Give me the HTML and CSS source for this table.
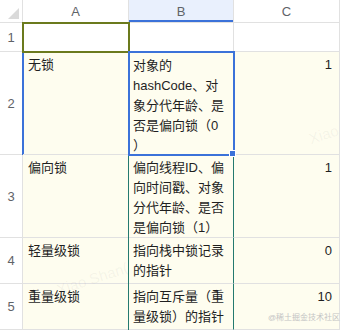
FILE: index.html
```html
<!DOCTYPE html>
<html lang="zh">
<head>
<meta charset="utf-8">
<link rel="stylesheet" href="styles.css">
</head>
<body>
<div class="sheet">
  <div class="grid">
    <div class="corner"><span class="tri"></span></div>
    <div class="colh">A</div>
    <div class="colh colh-sel">B</div>
    <div class="colh">C</div>

    <div class="rowh">1</div>
    <div class="cell white a1"></div>
    <div class="cell white"></div>
    <div class="cell white"></div>

    <div class="rowh">2</div>
    <div class="cell a2">无锁</div>
    <div class="cell b2">对象的<br>hashCode、对象分代年龄、是否是偏向锁（0）<span class="handle"></span></div>
    <div class="cell num">1</div>

    <div class="rowh">3</div>
    <div class="cell">偏向锁</div>
    <div class="cell bcol">偏向线程ID、偏向时间戳、对象分代年龄、是否是偏向锁（1）</div>
    <div class="cell num">1</div>

    <div class="rowh">4</div>
    <div class="cell">轻量级锁</div>
    <div class="cell bcol">指向栈中锁记录的指针</div>
    <div class="cell num">0</div>

    <div class="rowh">5</div>
    <div class="cell">重量级锁</div>
    <div class="cell bcol">指向互斥量（重量级锁）的指针</div>
    <div class="cell num">10</div>
  </div>
  <div class="wm wm1">Xiao Shan(肖山) 3991</div>
  <div class="wm wm2">Xiao Shan(肖山) 3991</div>
  <div class="wm wm3">Xiao</div>
  <div class="brand">@稀土掘金技术社区</div>
</div>
</body>
</html>
```
FILE: styles.css
```css
html, body {
  margin: 0;
  padding: 0;
  background: #ffffff;
}
.sheet {
  position: relative;
  width: 341px;
  height: 333px;
  overflow: hidden;
  font-family: "Liberation Sans", "Noto Sans CJK SC", sans-serif;
}
.grid {
  display: grid;
  grid-template-columns: 23px 106px 105px 106px;
  grid-template-rows: 23px 29px 103px 83px 46px 46px;
}
.grid > div {
  box-sizing: border-box;
  border-right: 1px solid #e1e1e1;
  border-bottom: 1px solid #e1e1e1;
}
.corner {
  background: #ffffff;
  display: flex;
  align-items: flex-end;
  justify-content: flex-end;
  padding: 0 3px 3px 0;
}
.tri {
  width: 0;
  height: 0;
  border-left: 11px solid transparent;
  border-bottom: 11px solid #dadada;
}
.colh {
  background: #ffffff;
  color: #5f6368;
  font-size: 13px;
  display: flex;
  align-items: center;
  justify-content: center;
}
.colh-sel {
  background: #e9f0fd;
  box-shadow: inset 0 -2px 0 #3b72d9;
}
.rowh {
  background: #ffffff;
  color: #5f6368;
  font-size: 13px;
  display: flex;
  align-items: center;
  justify-content: center;
}
.cell {
  background: #fefdef;
  color: #1f1f1f;
  font-size: 13px;
  line-height: 20px;
  padding: 3px 4px 0 5px;
  position: relative;
}
.cell.white {
  background: #ffffff;
}
.a1 {
  outline: 2px solid #6b7a1d;
  outline-offset: -1px;
  z-index: 2;
}
.a2 {
  box-shadow: -1px 0 0 #3b72d9, inset 1px 0 0 #3b72d9;
  z-index: 1;
}
.b2 {
  outline: 2px solid #3b72d9;
  outline-offset: -1px;
  padding: 4px 8.5px 0 4px;
  line-break: anywhere;
  text-spacing-trim: space-all;
  z-index: 3;
}
.handle {
  position: absolute;
  right: -3px;
  bottom: -3px;
  width: 5px;
  height: 5px;
  background: #3b72d9;
  border: 1px solid #ffffff;
}
.bcol {
  padding-left: 4px;
  padding-right: 5px;
  border-right-color: #247a6f !important;
  box-shadow: -1px 0 0 #247a6f;
  z-index: 1;
}
.num {
  text-align: right;
  padding-right: 7px;
}
.wm {
  position: absolute;
  color: rgba(120, 120, 120, 0.07);
  font-size: 15px;
  white-space: nowrap;
  transform: rotate(-18deg);
  transform-origin: left bottom;
  pointer-events: none;
}
.wm1 {
  left: 32px;
  top: 118px;
}
.wm2 {
  left: 60px;
  top: 278px;
}
.wm3 {
  left: 312px;
  top: 130px;
}
.brand {
  position: absolute;
  left: 268px;
  top: 311px;
  font-size: 8px;
  color: #c4c4c4;
  white-space: nowrap;
}
```
